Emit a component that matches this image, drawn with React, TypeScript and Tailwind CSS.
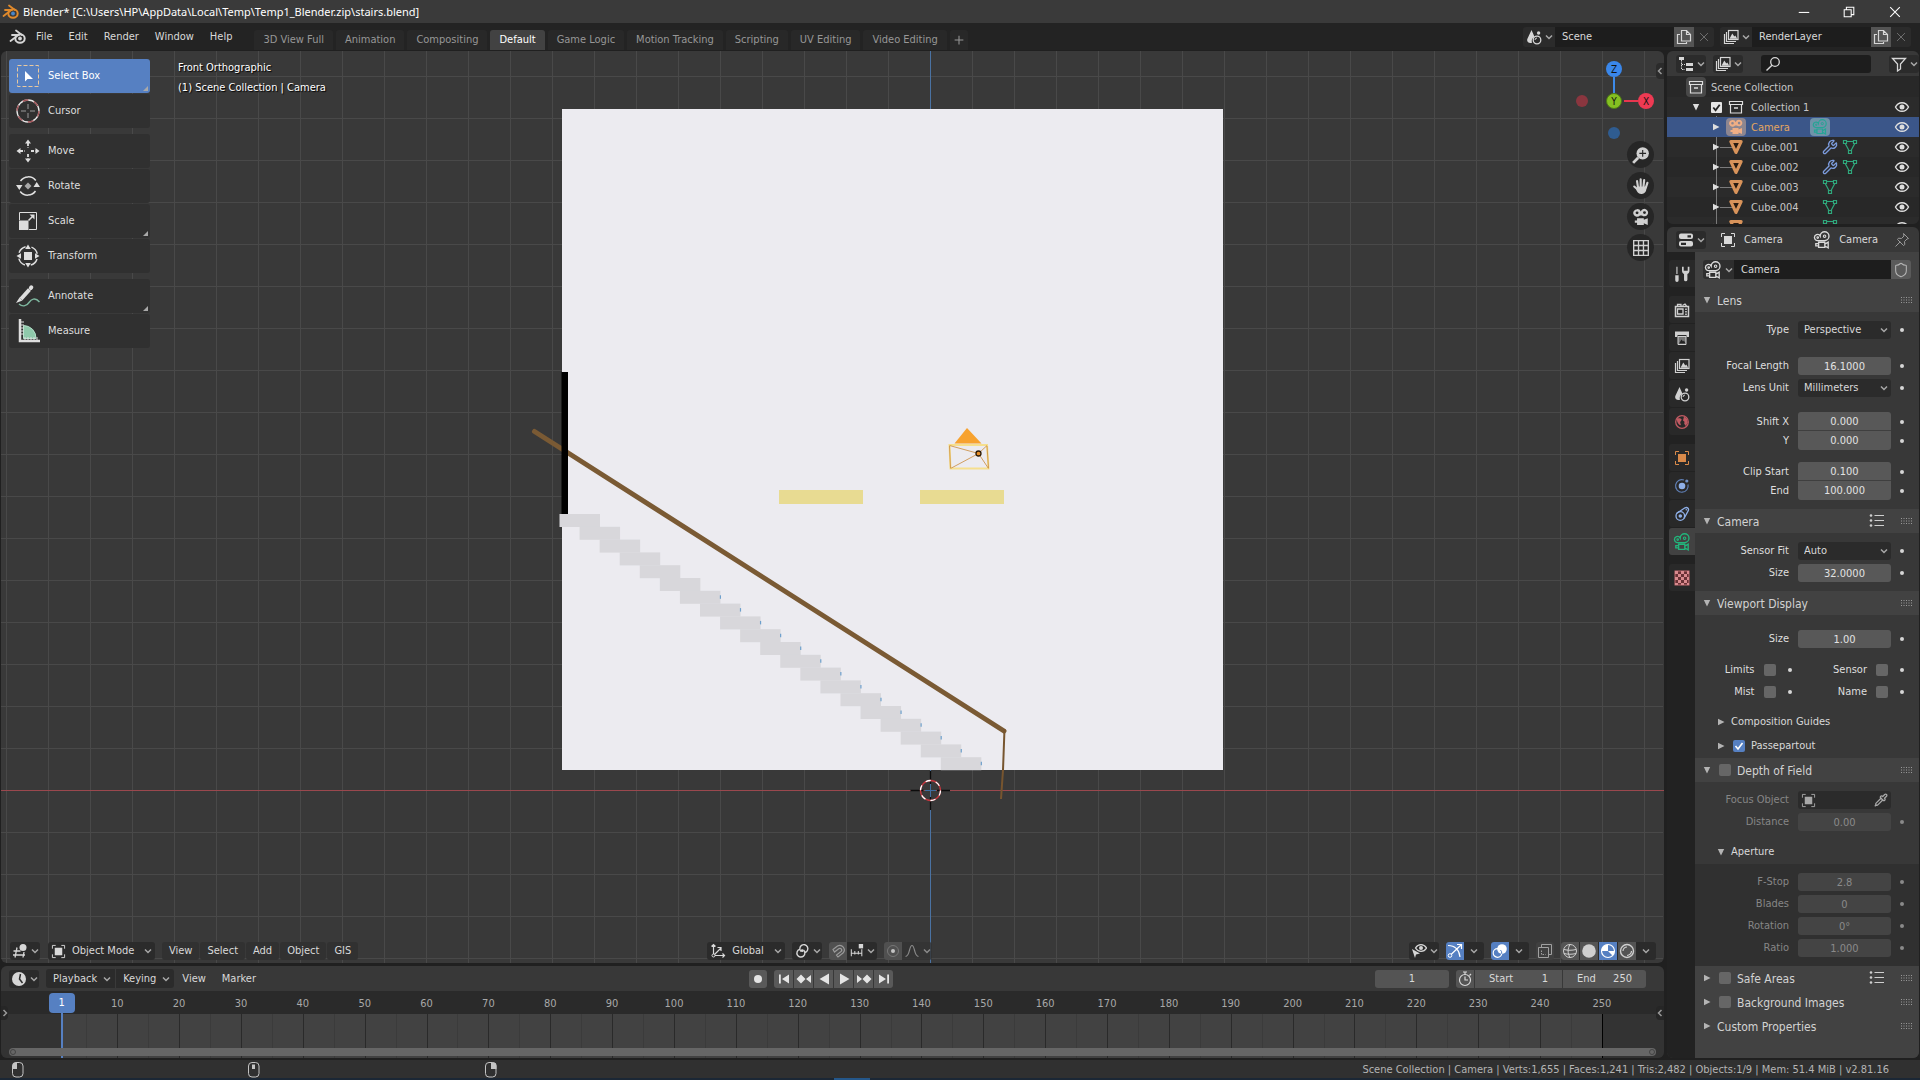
import React, { useId } from "react";
import { Wrench, Pipette, Shield } from "lucide-react";

/* ------------------------------------------------------------------ */
/* Icons, drawn on a 16 unit grid                                      */
/* ------------------------------------------------------------------ */

type IconProps = { className?: string; children?: React.ReactNode };

function Svg({ className = "size-4", children }: IconProps) {
  return (
    <svg
      viewBox="0 0 16 16"
      className={`shrink-0 ${className}`}
      fill="none"
      stroke="currentColor"
      strokeWidth="1"
      aria-hidden="true"
    >
      {children}
    </svg>
  );
}

const Chevron = ({ className = "size-2" }: { className?: string }) => (
  <svg viewBox="0 0 8 8" className={`shrink-0 ${className}`} fill="none" stroke="currentColor" strokeWidth="1.5" aria-hidden="true">
    <path d="M1 2.5 4 5.5 7 2.5" />
  </svg>
);

const SceneIcon = ({ className }: IconProps) => (
  <Svg className={className}>
    <path d="M5.5 1 1.2 10.2C.6 13 3 14.6 6 13.8A4.8 4.8 0 0 1 8.6 8z" fill="currentColor" stroke="none" />
    <circle cx="11" cy="11" r="3.8" strokeWidth="1.3" />
    <path d="M9 11a2 2 0 0 1 2-2" />
    <circle cx="12.6" cy="4" r="1.7" fill="currentColor" stroke="none" />
  </Svg>
);

const LayersIcon = ({ className }: IconProps) => (
  <Svg className={className}>
    <path d="M1.5 5v9.5H11M3.5 3v9.5H13" strokeWidth="1.2" />
    <rect x="5.5" y="1.5" width="9.5" height="9" strokeWidth="1.2" />
    <path d="m6.5 9.8 2.8-5.3 2 3 1-1 2 3.3z" fill="currentColor" stroke="none" />
  </Svg>
);

const DuplicateIcon = () => (
  <Svg className="size-4">
    <path d="M4 5.5H1.5v9h9V13" strokeWidth="1.2" />
    <path d="M5.5 1.5h5l4 4v6.5h-9zM10.5 1.5v4h4" strokeWidth="1.2" />
  </Svg>
);

const CrossIcon = ({ className }: IconProps) => (
  <Svg className={className}>
    <path d="m3.5 3.5 9 9m0-9-9 9" />
  </Svg>
);

const TreeIcon = () => (
  <Svg>
    <g fill="currentColor" stroke="none">
      <rect x="1" y="1" width="5" height="3" />
      <rect x="8" y="7" width="7" height="3" />
      <rect x="8" y="12" width="7" height="3" />
    </g>
    <path d="M3.5 4v9.5H7M3.5 8.5H7" strokeDasharray="1.5 1" />
  </Svg>
);

const SearchIcon = () => (
  <Svg>
    <circle cx="10" cy="6" r="4.3" strokeWidth="1.3" />
    <path d="m7 9.3-5.5 5.2" strokeWidth="1.5" />
  </Svg>
);

const FilterIcon = () => (
  <Svg>
    <path d="M1.5 2.5h13l-5 5.5v5L6.5 15V8z" strokeWidth="1.3" />
  </Svg>
);

const BoxIcon = ({ className }: IconProps) => (
  <Svg className={className}>
    <path d="M1.5 2.5h13v3h-13zM2.5 5.5v8.5h11V5.5" strokeWidth="1.2" />
    <path d="M6 9h4" strokeWidth="1.6" />
  </Svg>
);

const CameraSolid = ({ className }: IconProps) => (
  <Svg className={className}>
    <path
      fillRule="evenodd"
      fill="currentColor"
      stroke="none"
      d="M4.5 1a3.4 3.4 0 1 0 2.6 5.6h1.8A3.3 3.3 0 1 0 7.8 3.2 3.4 3.4 0 0 0 4.5 1zm0 2a1.3 1.3 0 1 1 0 2.6 1.3 1.3 0 0 1 0-2.6zm6.6-.2a1.3 1.3 0 1 1 0 2.6 1.3 1.3 0 0 1 0-2.6z"
    />
    <path d="M4.5 9h6v1.5L14 9v6l-3.5-1.5V15h-6v-2h-2v-2h2z" fill="currentColor" stroke="none" />
  </Svg>
);

const CameraOutline = ({ className }: IconProps) => (
  <Svg className={className}>
    <path d="M5 8.500H4a2.700 2.700 0 1 1 2.400-4A3.900 3.900 0 1 1 10.500 8.500H5M5 10h5.500v4.500H5zM5 11.200H2.500v2H5M10.500 11.700l3-1.700v5l-3-1.700" strokeWidth="1.200" />
    <circle cx="4.200" cy="5.800" r=".7" />
    <circle cx="10.300" cy="4.600" r="1.100" />
  </Svg>
);

const MeshObjectIcon = () => (
  <Svg className="size-4">
    <path d="M2.800 2.500h10.400L8 13.500z" stroke="#d8935a" fill="#2a1c12" strokeWidth="3" strokeLinejoin="round" />
  </Svg>
);

const MeshDataIcon = () => (
  <Svg className="size-4">
    <g stroke="#2fa87c" strokeWidth="1.200">
      <path d="M4.500 2.500h7M3.200 4.500l4 7.500M12.800 4.500l-4 7.500" />
      <path d="M1.500 1.500h3v3h-3zM11.500 1.500h3v3h-3zM6.500 11.500h3v3h-3z" />
    </g>
  </Svg>
);

const EyeIcon = () => (
  <Svg className="size-4">
    <path d="M1.500 8C3 5 5.500 3.700 8 3.700S13 5 14.500 8C13 11 10.500 12.300 8 12.300S3 11 1.500 8z" strokeWidth="1.400" />
    <circle cx="8" cy="8" r="2.500" fill="currentColor" stroke="none" />
  </Svg>
);

const PropsEditorIcon = () => (
  <Svg>
    <rect x="1" y="1.500" width="14" height="5.500" rx="2" fill="currentColor" stroke="none" />
    <rect x="1" y="9" width="14" height="5.500" rx="2" fill="currentColor" stroke="none" />
    <path d="M9.500 3.200H13v2.200H9.500zM3 10.700h5v2.200H3z" fill="#2a2a2a" stroke="none" />
  </Svg>
);

const ObjectIcon = ({ className }: IconProps) => (
  <Svg className={className}>
    <path d="M1.500 5V1.500H5M11 1.500h3.500V5M14.500 11v3.500H11M5 14.500H1.500V11" />
    <rect x="4" y="4" width="8" height="8" fill="currentColor" stroke="none" />
  </Svg>
);

const PinIcon = () => (
  <Svg>
    <path d="m9.500 1.500 5 5-1.500.5-2.500 2.500.3 3-1.300 1-6-6 1-1.300 3 .3L10 4zM6.200 9.800 1.500 14.500" />
  </Svg>
);

const ToolsIcon = () => (
  <Svg className="size-[18px]">
    <path d="M3.500 1.500V8" />
    <path d="M2 9h3v4.500a1.500 1.500 0 0 1-3 0zM8 1.500v3.500c0 1.600.7 2.300 1.800 3v5a1.500 1.500 0 0 0 3 0V8C14 7.300 14.600 6.600 14.600 5V1.500h-1.500v3.600h-3.600V1.500z" fill="currentColor" stroke="none" />
  </Svg>
);

const RenderIcon = () => (
  <Svg>
    <path d="M1.500 4.500h13v10h-13z" strokeWidth="1.500" />
    <path d="M3.500 7h5.500v5H3.500z" strokeWidth="1.300" />
    <path d="M12 6.500V8M12 9v1.500M12 11.500V13" strokeWidth="1.600" />
    <path d="M3.500 4V2.500H7V4M8.500 3.500 11 2l1.500 2" strokeWidth="1.300" />
  </Svg>
);

const OutputIcon = () => (
  <Svg>
    <path d="M1 1.500h14V7h-2.500V5h-9v2H1z" fill="currentColor" stroke="none" />
    <path d="M4 6.500h8v8H4z" fill="#777" />
    <path d="m5 13.500 2.500-4 1.500 2 1-1 1.500 3z" fill="#222" stroke="none" />
  </Svg>
);

const WorldIcon = () => (
  <Svg>
    <circle cx="8" cy="8" r="6.300" stroke="#c05a62" strokeWidth="1.300" />
    <path d="M3 4.500c2-.5 3.500-.5 4.500.8.600 1-.8 1.700-1.200 2.700-.4 1.200.8 1.600.5 3.300C5 11 2.500 8.500 3 4.500zM10 2.500l3 2.500.8 3.500-2 3.500-1.600-2.200.3-2-1.500-1.300z" fill="#c05a62" stroke="none" />
  </Svg>
);

const OrbitIcon = () => (
  <Svg>
    <path d="M14 6.500A6.300 6.300 0 1 1 10 2" stroke="#5f7fb5" strokeWidth="1.200" />
    <circle cx="8" cy="8" r="3.300" fill="#8fb0e8" stroke="none" />
    <circle cx="12.800" cy="3" r="1.600" fill="#6f8fc4" stroke="none" />
  </Svg>
);

const ConstraintIcon = () => (
  <Svg>
    <path d="M2.500 7.500 11 1.800c2.500-1 4.500 1 3 3.400L10 12.500" stroke="#8fb0e8" strokeWidth="1.300" />
    <circle cx="6.300" cy="10" r="4.300" stroke="#8fb0e8" strokeWidth="1.300" />
    <circle cx="6.300" cy="10" r="1.800" fill="#8fb0e8" stroke="none" />
    <circle cx="12.300" cy="3.800" r=".8" fill="#8fb0e8" stroke="none" />
  </Svg>
);

const CheckerIcon = () => (
  <Svg>
    <rect x="1" y="1" width="14" height="14" fill="#6a3236" stroke="#c46a70" />
    <g fill="#d98a8e" stroke="none">
      <path d="M1 1h3v3H1zM7 1h3v3H7zM4 4h3v3H4zM10 4h3v3h-3zM1 7h3v3H1zM7 7h3v3H7zM4 10h3v3H4zM10 10h3v3h-3zM13 7h2v3h-2zM13 1h2v3h-2zM1 13h3v2H1zM7 13h3v2H7zM13 13h2v2h-2z" />
    </g>
  </Svg>
);

const PresetIcon = () => (
  <Svg className="size-4">
    <path d="M5.500 2.500H15M5.500 7.500H15M5.500 12.500H15" strokeWidth="1.200" />
    <g fill="currentColor" stroke="none">
      <circle cx="2" cy="2.500" r="1.300" />
      <circle cx="2" cy="7.500" r="1.300" />
      <circle cx="2" cy="12.500" r="1.300" />
    </g>
  </Svg>
);

const GripIcon = () => (
  <svg width="11" height="6" className="shrink-0" stroke="#9a9a9a" strokeWidth="1" strokeDasharray="1 1.500" aria-hidden="true">
    <path d="M0 .5h11M0 3h11M0 5.500h11" />
  </svg>
);

const BlenderLogo = ({ color, dot }: { color: string; dot: string }) => (
  <svg viewBox="0 0 18 16" className="h-4 w-[18px] shrink-0" fill="none" aria-hidden="true">
    <path d="M7 1.500 13 6M1.500 12 9 6.200M3 6h7" stroke={color} strokeWidth="1.800" strokeLinecap="round" />
    <ellipse cx="11" cy="9.500" rx="4.700" ry="4.300" stroke={color} strokeWidth="2" />
    <circle cx="11" cy="9.500" r="1.900" fill={dot} />
  </svg>
);

/* ------------------------------------------------------------------ */
/* Shared controls                                                     */
/* ------------------------------------------------------------------ */

function IconMenu({ label, children, className = "" }: { label: string; children: React.ReactNode; className?: string }) {
  return (
    <button
      aria-label={label}
      className={`flex h-[18px] w-[30px] shrink-0 items-center justify-center gap-[3px] rounded-[3px] bg-[#2b2b2b] text-[#d6d6d6] ${className}`}
    >
      {children}
      <Chevron className="size-2 text-[#a8a8a8]" />
    </button>
  );
}

function Dropdown({ id, value, label, className = "" }: { id?: string; value: string; label?: string; className?: string }) {
  return (
    <span className={`relative flex items-center ${className}`}>
      <select
        id={id}
        aria-label={label}
        defaultValue={value}
        className="h-full w-full appearance-none rounded-[3px] bg-[#2b2b2b] pr-4 pl-1.5 text-[#d9d9d9] outline-none"
      >
        <option>{value}</option>
      </select>
      <Chevron className="pointer-events-none absolute right-[3px] size-2 text-[#a8a8a8]" />
    </span>
  );
}

function Tick({ id, checked = false, label }: { id?: string; checked?: boolean; label?: string }) {
  return (
    <span className="relative flex size-3 shrink-0">
      <input
        id={id}
        aria-label={label}
        type="checkbox"
        defaultChecked={checked}
        className="peer size-3 appearance-none rounded-[2px] bg-[#666] checked:bg-[#5680c2]"
      />
      <svg viewBox="0 0 12 12" className="pointer-events-none absolute inset-0 hidden peer-checked:block" fill="none" stroke="#fff" strokeWidth="1.600">
        <path d="m2.500 6 2.500 3 4.500-6" />
      </svg>
    </span>
  );
}

/* ------------------------------------------------------------------ */
/* Title bar and top bar                                               */
/* ------------------------------------------------------------------ */

function TitleBar() {
  return (
    <header className="flex h-[23px] shrink-0 items-center bg-[#3a3a3a] pr-0.5 font-['Noto_Sans','Open_Sans',sans-serif] text-[11px] text-white">
      <span className="ml-0.5 flex">
        <BlenderLogo color="#e08a2c" dot="#4a86c8" />
      </span>
      <h1 className="ml-[3px] whitespace-nowrap">Blender* [C:\Users\HP\AppData\Local\Temp\Temp1_Blender.zip\stairs.blend]</h1>
      <div className="ml-auto flex">
        <button aria-label="Minimize" className="flex w-[45px] justify-center">
          <Svg className="size-3.5"><path d="M2 8.500h12" strokeWidth="1.200" /></Svg>
        </button>
        <button aria-label="Restore" className="flex w-[46px] justify-center">
          <Svg className="size-3.5"><path d="M2.500 5.500h8v8h-8zM5 5V2.500h8.500V11H11" strokeWidth="1.200" /></Svg>
        </button>
        <button aria-label="Close" className="flex w-[46px] justify-center">
          <Svg className="size-3.5"><path d="m2.500 2.500 11 11m0-11-11 11" strokeWidth="1.200" /></Svg>
        </button>
      </div>
    </header>
  );
}

const workspaces = [
  "3D View Full",
  "Animation",
  "Compositing",
  "Default",
  "Game Logic",
  "Motion Tracking",
  "Scripting",
  "UV Editing",
  "Video Editing",
];

function DataBlock({ icon, label, value }: { icon: React.ReactNode; label: string; value: string }) {
  return (
    <div className="flex h-5 w-[191px] overflow-hidden rounded-[3px] bg-[#2b2b2b]">
      <button aria-label={`Browse ${label}`} className="flex w-8 shrink-0 items-center justify-center gap-[3px] text-[#d6d6d6]">
        {icon}
        <Chevron className="size-2 text-[#a8a8a8]" />
      </button>
      <input aria-label={label} defaultValue={value} className="w-0 flex-1 bg-[#1d1d1d] px-[7px] text-[#d9d9d9] outline-none" />
      <button aria-label={`New ${label}`} className="flex w-5 items-center justify-center bg-[#545454] text-[#d6d6d6]">
        <DuplicateIcon />
      </button>
      <button aria-label={`Remove ${label}`} className="flex w-5 items-center justify-center text-[#777]">
        <CrossIcon className="size-3.5" />
      </button>
    </div>
  );
}

function TopBar() {
  return (
    <div className="flex h-[27px] shrink-0 items-center bg-[#232323] pr-[9px] text-[#d9d9d9]">
      <button aria-label="Blender" className="ml-[9px] flex">
        <BlenderLogo color="#d6d6d6" dot="#d6d6d6" />
      </button>
      <nav className="ml-px flex">
        {["File", "Edit", "Render", "Window", "Help"].map((m) => (
          <button key={m} className="h-5 px-2">{m}</button>
        ))}
      </nav>
      <div role="tablist" className="ml-3.5 flex gap-[3px] self-end">
        {workspaces.map((w) => (
          <button
            key={w}
            role="tab"
            aria-selected={w === "Default"}
            className={`h-5 rounded-t-[3px] px-[9px] whitespace-nowrap ${w === "Default" ? "bg-[#424242] text-white" : "bg-[#282828] text-[#979797]"}`}
          >
            {w}
          </button>
        ))}
        <button aria-label="Add workspace" className="flex h-5 w-[18px] items-center justify-center rounded-t-[3px] bg-[#282828] text-[#979797]">
          <Svg className="size-3.5"><path d="M8 3v10M3 8h10" strokeWidth="1.200" /></Svg>
        </button>
      </div>
      <div className="ml-auto flex gap-1.5">
        <DataBlock label="Scene" value="Scene" icon={<SceneIcon />} />
        <DataBlock label="View layer" value="RenderLayer" icon={<LayersIcon />} />
      </div>
    </div>
  );
}

/* ------------------------------------------------------------------ */
/* 3D viewport                                                         */
/* ------------------------------------------------------------------ */

function Scene3D() {
  const steps = Array.from({ length: 20 }, (_, i) => i);
  return (
    <svg className="absolute inset-0 h-full w-full" aria-label="Front orthographic view">
      <g transform="translate(-1 -51)">
        <defs>
          <pattern id="grid" x="6" y="76" width="42" height="42" patternUnits="userSpaceOnUse">
            <path d="M.5 0v42M0 .5h42" stroke="#494949" fill="none" />
          </pattern>
        </defs>
        <rect x="0" y="51" width="100%" height="100%" fill="url(#grid)" />
        <path d="M0 790.500h1920" stroke="#9a484e" />
        <path d="M930.500 51v912" stroke="#4a72a2" />
        <rect x="562" y="109" width="661" height="661" fill="#ecebf0" />
        <rect x="779" y="490" width="84" height="14" fill="#e8db92" />
        <rect x="920" y="490" width="84" height="14" fill="#e8db92" />
        {steps.map((i) => (
          <rect key={i} x={559.5 + i * 20.07} y={514 + i * 12.8} width="40.500" height="13" fill="#d8d7db" />
        ))}
        {steps.slice(6).map((i) => (
          <path key={i} d={`M${600 + i * 20.07} ${518.5 + i * 12.8}v3.5`} stroke="#6ea0cc" strokeWidth="1.200" />
        ))}
        <path d="m534.500 431.500 469.500 299.500" stroke="#7a5a34" strokeWidth="5" strokeLinecap="round" />
        <path d="m1004.500 729-1.500 41-2 29" stroke="#77552f" strokeWidth="2" fill="none" />
        <rect x="561.500" y="372" width="6.500" height="142" fill="#000" />
        <path d="m967 428 14.500 15.500h-27z" fill="#f7a22f" />
        <path d="M949.500 445H987l1.500 23.500h-38z" stroke="#f6df8e" strokeWidth="2" fill="none" />
        <path d="m949.500 445.500 29 8 8.500-8M978.500 453.500l-28 15M978.500 453.500l10 15M949.500 446l1 22M987 446l1.500 22" stroke="#c98a3c" strokeWidth=".8" fill="none" />
        <circle cx="978.500" cy="453.500" r="2.500" fill="#e8902a" stroke="#2a1a08" strokeWidth="1.300" />
        <path d="M910.500 790.500h13M937 790.500h13M930.500 771v13M930.500 797v13" stroke="#0c0c0c" strokeWidth="1.300" />
        <path d="M930.500 785v11M925 790.500h11" stroke="#3f6da0" />
        <circle cx="930.500" cy="790.500" r="10" stroke="#c4373f" strokeWidth="1.300" fill="none" />
        <circle cx="930.500" cy="790.500" r="10" stroke="#fff" strokeWidth="1.300" fill="none" strokeDasharray="5.230 5.230" />
      </g>
    </svg>
  );
}

const toolGroups: { name: string; icon: React.ReactNode; more?: boolean; active?: boolean }[][] = [
  [
    {
      name: "Select Box",
      active: true,
      more: true,
      icon: (
        <>
          <rect x="1.500" y="1.500" width="21" height="21" stroke="#e8c9a0" strokeDasharray="4 2" />
          <path d="M9 7v10.500l2.500-2.500H17z" fill="#fff" stroke="none" />
        </>
      ),
    },
    {
      name: "Cursor",
      icon: (
        <>
          <circle cx="12" cy="12" r="11" stroke="#e8e8e8" strokeWidth="1.300" />
          <circle cx="12" cy="12" r="11" stroke="#a05055" strokeWidth="1.300" strokeDasharray="5.760 5.760" />
          <path d="M12 5v5M12 14v5M5 12h5M14 12h5" stroke="#9a9a9a" />
        </>
      ),
    },
  ],
  [
    {
      name: "Move",
      icon: (
        <>
          <path d="M12 4v5M12 15v5M4 12h5M15 12h5" strokeWidth="1.800" strokeDasharray="3 1.500" />
          <path d="m12 .5 3 4H9zM12 23.500l3-4H9zM.5 12l4-3v6zM23.500 12l-4-3v6z" fill="currentColor" stroke="none" />
        </>
      ),
    },
    {
      name: "Rotate",
      icon: (
        <>
          <path d="M4.500 7A9.500 9.500 0 0 1 19.800 6.500M19.500 17A9.500 9.500 0 0 1 4.200 17.500" strokeWidth="1.500" />
          <path d="M0 11h6.500l-3.200 5zM24 13h-6.500l3.200-5z" fill="currentColor" stroke="none" />
          <path d="m12 8.500 3.500 3.500-3.500 3.500L8.500 12z" fill="#a8a8a8" stroke="none" />
        </>
      ),
    },
    {
      name: "Scale",
      more: true,
      icon: (
        <>
          <path d="M3.500 11V3.500h17v17H13" />
          <rect x="3" y="11.500" width="9.500" height="9.500" fill="currentColor" stroke="none" />
          <path d="m12.500 11.500 4-4" strokeWidth="1.600" />
          <path d="M13.500 5.500h5v5z" fill="currentColor" stroke="none" />
        </>
      ),
    },
    {
      name: "Transform",
      icon: (
        <>
          <circle cx="12" cy="12" r="9.500" strokeWidth="1.500" strokeDasharray="9 6" strokeDashoffset="-3" />
          <rect x="8" y="8" width="8" height="8" fill="currentColor" stroke="none" />
          <path d="m12 .5 2.800 4.500H9.200zM12 23.500l2.800-4.500H9.200zM.5 12 5 9.200v5.600zM23.500 12 19 9.200v5.600z" fill="currentColor" stroke="none" />
        </>
      ),
    },
  ],
  [
    {
      name: "Annotate",
      more: true,
      icon: (
        <>
          <path d="M3 20c4 3.500 8 1.500 10-1.500s6-6 10.500-.5" stroke="#7fb8a0" strokeWidth="1.400" />
          <path d="M13.500 5.500 5 15" strokeWidth="4" />
          <path d="M3.500 13.500 0 19l6.500-2.500z" fill="currentColor" stroke="none" />
          <path d="m14.800 4 .5-.6" strokeWidth="4" strokeLinecap="round" />
        </>
      ),
    },
    {
      name: "Measure",
      icon: (
        <>
          <path d="M7.500 6.500v13H20A12.500 12.500 0 0 0 7.500 6.500z" fill="#8fc9ab" stroke="#b4e0ca" />
          <path d="M4 0v22h20" strokeWidth="2.500" />
          <path d="M5 3h3M5 6h3M5 9h3M5 12h3M5 15h3M9 21v-3M12 21v-3M15 21v-3M18 21v-3M21 21v-3" />
        </>
      ),
    },
  ],
];

function Toolbar() {
  return (
    <div role="toolbar" aria-label="Tools" className="absolute top-2 left-2 flex w-[141px] flex-col gap-1.5">
      {toolGroups.map((group, i) => (
        <div key={i} className="flex flex-col gap-px">
          {group.map((t) => (
            <button
              key={t.name}
              className={`relative flex h-[34px] items-center gap-2 rounded-[3px] pl-[7px] text-left ${t.active ? "bg-[#5680c2] text-white" : "bg-[#303030] text-[#dedede]"}`}
            >
              <svg viewBox="0 0 24 24" className="size-6 shrink-0" fill="none" stroke="currentColor" aria-hidden="true">
                {t.icon}
              </svg>
              {t.name}
              {t.more && (
                <svg viewBox="0 0 5 5" className="absolute right-0.5 bottom-0.5 size-[5px]" fill="#a9a9a9" aria-hidden="true">
                  <path d="M5 0v5H0z" />
                </svg>
              )}
            </button>
          ))}
        </div>
      ))}
    </div>
  );
}

function AxisGizmo() {
  return (
    <svg viewBox="0 0 80 84" className="h-[84px] w-20" aria-label="View axes" fontSize="10" textAnchor="middle" fill="#111">
      <path d="M40 18v17" stroke="#3d8ae8" strokeWidth="2" />
      <path d="M50 42h14" stroke="#e8364f" strokeWidth="2" />
      <circle cx="8" cy="42" r="6" fill="#8a363f" />
      <circle cx="40" cy="74" r="6" fill="#2f5c90" />
      <circle cx="40" cy="10" r="8" fill="#3a87ea" />
      <circle cx="40" cy="42" r="7.500" fill="#85c022" stroke="#4d7a16" />
      <circle cx="72" cy="42" r="8" fill="#ee3a53" />
      <text x="40" y="14">Z</text>
      <text x="40" y="46">Y</text>
      <text x="72" y="46">X</text>
    </svg>
  );
}

function ViewNavigation() {
  const round = "flex size-[27px] items-center justify-center rounded-full bg-[#262626] text-[#d0d0d0]";
  return (
    <div className="absolute top-2 right-2.5 flex flex-col items-end">
      <AxisGizmo />
      <div className="-mt-0.5 flex flex-col gap-1">
        <button aria-label="Zoom" className={round}>
          <Svg className="size-[18px]">
            <circle cx="9.500" cy="6.500" r="5.500" fill="currentColor" stroke="none" />
            <path d="M5.500 10.500 1 15" strokeWidth="2.500" />
            <path d="M9.500 3.500v6M6.500 6.500h6" stroke="#262626" />
          </Svg>
        </button>
        <button aria-label="Pan" className={round}>
          <Svg className="size-[18px]">
            <g strokeLinecap="round" strokeWidth="1.900">
              <path d="M5.300 9 4.500 3.700M7.700 8.500V2M10.200 8.500l.6-5.800M12.300 9.500l1.400-4.300M5.500 11.500 2 8.500" />
            </g>
            <path d="M4.500 8.500h8.500c0 3.500-1 6.500-4.500 6.500-2.500 0-3.500-1-4.800-3.700z" fill="currentColor" stroke="none" />
          </Svg>
        </button>
        <button aria-label="Camera view" className={round}>
          <CameraSolid className="size-[18px]" />
        </button>
        <button aria-label="Orthographic" className={round}>
          <Svg className="size-[18px]">
            <path d="M1.500 1.500h13v13h-13zM5.800 1.500v13M10.200 1.500v13M1.500 5.800h13M1.500 10.200h13" strokeWidth="1.200" />
          </Svg>
        </button>
      </div>
    </div>
  );
}

const flatBtn = "flex h-[18px] items-center justify-center";

function ViewportHeader() {
  return (
    <div className="absolute inset-x-0 bottom-[3px] flex items-center pr-2 pl-[9px] text-[#d9d9d9]">
      <IconMenu label="Editor type">
        <Svg>
          <path d="M5 4.500 3 14.500M12 9l-1 5.500M1.500 8h7M1 12h12" strokeWidth="1.300" />
          <circle cx="11" cy="4.500" r="3.500" fill="currentColor" stroke="none" />
        </Svg>
      </IconMenu>
      <button className="ml-2 flex h-[18px] w-[107px] items-center rounded-[3px] bg-[#2b2b2b] px-[3px]">
        <ObjectIcon className="size-[15px]" />
        <span className="ml-1.5 whitespace-nowrap">Object Mode</span>
        <Chevron className="ml-auto size-2 text-[#a8a8a8]" />
      </button>
      <nav className="ml-[7px] flex gap-px">
        {["View", "Select", "Add", "Object", "GIS"].map((m) => (
          <button key={m} className="h-[18px] rounded-[3px] bg-[#313131] px-[7px]">{m}</button>
        ))}
      </nav>
      <span className="flex-[347]" />
      <div className="flex gap-[7px]">
        <button className="flex h-[18px] w-[78px] items-center rounded-[3px] bg-[#2b2b2b] px-[3px]">
          <Svg>
            <path d="M3.500 1.500v11h11M1.500 3.500l2-2 2 2M12.500 10.500l2 2-2 2M4 12l7-7M7.500 4.500H11V8" strokeWidth="1.200" />
            <circle cx="3.500" cy="12.500" r="1.500" fill="#2b2b2b" />
          </Svg>
          <span className="ml-1.5">Global</span>
          <Chevron className="ml-auto size-2 text-[#a8a8a8]" />
        </button>
        <IconMenu label="Pivot point">
          <Svg>
            <path d="M7 8.500A4 4 0 1 1 11 9.500M9.500 7A4 4 0 1 1 5.500 6.300" strokeWidth="1.400" />
            <circle cx="8.200" cy="7.700" r="1.400" fill="currentColor" stroke="none" />
          </Svg>
        </IconMenu>
        <div className="flex overflow-hidden rounded-[3px]">
          <button aria-label="Snap" className={`${flatBtn} w-[18px] bg-[#505050] text-[#9a9a9a]`}>
            <Svg><path d="M3 6.500 7.500 3a4.500 4.500 0 0 1 5.500 7l-5 4-1.500-2L11 8.500a1.800 1.800 0 0 0-2.300-2.800L4.500 9z" strokeWidth="1.200" /></Svg>
          </button>
          <IconMenu label="Snapping" className="rounded-none">
            <Svg className="size-3.5">
              <path d="M1.500 6v8M5.500 8v4M9.500 8v4M13.500 6v8M1.500 10.500h12" strokeWidth="1.200" />
              <rect x="10" y="0" width="5" height="5" fill="currentColor" stroke="none" />
            </Svg>
          </IconMenu>
        </div>
        <div className="flex overflow-hidden rounded-[3px]">
          <button aria-label="Proportional editing" className={`${flatBtn} w-[18px] bg-[#505050] text-[#777]`}>
            <Svg>
              <circle cx="8" cy="8" r="5.500" />
              <circle cx="8" cy="8" r="2" fill="#c4c4c4" stroke="none" />
            </Svg>
          </button>
          <button aria-label="Falloff" className={`${flatBtn} w-[30px] gap-[3px] bg-[#333]/80 text-[#8a8a8a]`}>
            <Svg><path d="M1.500 13.500C6 13.500 5 2.500 8 2.500s2 11 6.500 11" strokeWidth="1.200" /></Svg>
            <Chevron className="size-2" />
          </button>
        </div>
      </div>
      <span className="flex-[474]" />
      <div className="flex gap-[7px]">
        <IconMenu label="Object visibility">
          <Svg>
            <path d="M4.500 5C6 2.500 8 1.700 10 1.700s4 .8 5.500 3.300C14 7.500 12 8.300 10 8.300S6 7.500 4.500 5z" strokeWidth="1.300" />
            <circle cx="10" cy="5" r="2" fill="currentColor" stroke="none" />
            <path d="m1 6 8 4.500-4 1L4 15z" fill="currentColor" stroke="none" />
          </Svg>
        </IconMenu>
        <div className="flex overflow-hidden rounded-[3px] bg-[#2b2b2b]">
          <button aria-label="Show gizmo" className={`${flatBtn} w-[18px] bg-[#5680c2] text-white`}>
            <Svg>
              <path d="M1 2.500c7 0 11.500 4.500 12 11.500M3 12.500 14 2M10 1.500h4.500V6" strokeWidth="1.200" />
              <circle cx="3" cy="12.500" r="1.800" fill="#5680c2" />
            </Svg>
          </button>
          <button aria-label="Gizmo options" className={`${flatBtn} w-5 text-[#a8a8a8]`}><Chevron /></button>
        </div>
        <div className="flex overflow-hidden rounded-[3px] bg-[#2b2b2b]">
          <button aria-label="Show overlays" className={`${flatBtn} w-[18px] bg-[#5680c2] text-white`}>
            <Svg>
              <circle cx="10" cy="6" r="4.800" fill="currentColor" stroke="none" />
              <circle cx="5.500" cy="10" r="4.300" strokeWidth="1.200" />
              <path d="M8.500 7a4.300 4.300 0 0 1 1.200 3.800" stroke="#5680c2" />
            </Svg>
          </button>
          <button aria-label="Overlay options" className={`${flatBtn} w-5 text-[#a8a8a8]`}><Chevron /></button>
        </div>
        <button aria-label="X-ray" className={`${flatBtn} w-[18px] rounded-[3px] bg-[#404040] text-[#a0a0a0]`}>
          <Svg><path d="M1.500 4.500h10v10h-10zM4.500 4V1.500h10v10H12" /><path d="M4.500 7.500v4h4" strokeDasharray="1.500 1" /></Svg>
        </button>
        <div className="flex overflow-hidden rounded-[3px] bg-[#2b2b2b]">
          <button aria-label="Wireframe" className={`${flatBtn} w-[18px] bg-[#545454] text-[#cfcfcf]`}>
            <Svg><circle cx="8" cy="8" r="6.500" /><path d="M2 6.500c4 1 8 1 12 0M2 10.500c4 1 8 1 12 0M8 1.500c-2.500 4-2.500 9 0 13" /></Svg>
          </button>
          <button aria-label="Solid" className={`${flatBtn} ml-px w-[18px] bg-[#545454] text-[#cfcfcf]`}>
            <Svg><circle cx="8" cy="8" r="6.800" fill="currentColor" stroke="none" /></Svg>
          </button>
          <button aria-label="Material preview" className={`${flatBtn} ml-px w-[18px] bg-[#5680c2] text-white`}>
            <Svg>
              <circle cx="8" cy="8" r="6.500" strokeWidth="1.200" />
              <path d="M8 8V1.500A6.500 6.500 0 0 0 1.500 8zM8 8h6.500a6.500 6.500 0 0 1-2 4.600zM8 8l-.5 6.400" fill="currentColor" stroke="none" />
            </Svg>
          </button>
          <button aria-label="Rendered" className={`${flatBtn} ml-px w-[18px] bg-[#545454] text-[#cfcfcf]`}>
            <Svg><circle cx="8" cy="8" r="6.500" strokeWidth="1.400" /><path d="M4 8a4 4 0 0 1 4-4M12.500 8A4.500 4.500 0 0 1 8 12.500" strokeWidth="1.200" /></Svg>
          </button>
          <button aria-label="Shading options" className={`${flatBtn} w-5 text-[#a8a8a8]`}><Chevron /></button>
        </div>
      </div>
    </div>
  );
}

function Viewport() {
  return (
    <main className="relative min-h-0 flex-1 overflow-hidden rounded-md bg-[#393939]">
      <Scene3D />
      <Toolbar />
      <div className="absolute top-[7px] left-[177px] flex flex-col text-white [text-shadow:1px_1px_1px_#000]">
        <span className="h-5 leading-5">Front Orthographic</span>
        <span className="h-5 leading-5">(1) Scene Collection | Camera</span>
      </div>
      <ViewNavigation />
      <button aria-label="Show sidebar" className="absolute top-3 right-0 flex h-4 w-2 items-center justify-center rounded-l bg-[#2b2b2b] text-[#999]">
        <Chevron className="size-2 rotate-90" />
      </button>
      <ViewportHeader />
    </main>
  );
}

/* ------------------------------------------------------------------ */
/* Timeline                                                            */
/* ------------------------------------------------------------------ */

const framePos = (frame: number) => `${((54.4 + frame * 6.186) / 1663) * 100}%`;
const tens = Array.from({ length: 25 }, (_, i) => (i + 1) * 10);
const fives = Array.from({ length: 25 }, (_, i) => i * 10 + 5);

const transport: [string, string][] = [
  ["Jump to start", "M3 3.500h1.800v9H3zM13 3.500v9L6 8z"],
  ["Previous keyframe", "M5 3.500 9.500 8 5 12.500.5 8zM15 4v8L10 8z"],
  ["Play backwards", "M13 2.500v11L3.500 8z"],
  ["Play", "M4 2.500v11L13.500 8z"],
  ["Next keyframe", "M11 3.500 15.500 8 11 12.500 6.500 8zM1 4v8l5-4z"],
  ["Jump to end", "M13 3.500h-1.800v9H13zM3 3.500v9L10 8z"],
];

function Timeline() {
  const startId = useId();
  const endId = useId();
  return (
    <section aria-label="Timeline" className="relative flex flex-col overflow-hidden rounded-md bg-[#2a2a2a]">
      <div className="flex h-[25px] items-center bg-[#383838] pr-[18px] pl-2 text-[#d9d9d9]">
        <div className="flex items-center">
          <IconMenu label="Timeline editor">
            <Svg>
              <circle cx="8" cy="8" r="7" fill="currentColor" stroke="none" />
              <path d="M9.500 3 8.500 8l3 4" stroke="#2b2b2b" strokeWidth="1.500" />
            </Svg>
          </IconMenu>
          <div className="ml-[7px] flex overflow-hidden rounded-[3px] bg-[#2b2b2b]">
            {["Playback", "Keying"].map((m) => (
              <button key={m} className="flex h-[19px] items-center gap-1.5 pr-1 pl-[7px] first:border-r first:border-[#3a3a3a]">
                {m}
                <Chevron className="size-2 text-[#a8a8a8]" />
              </button>
            ))}
          </div>
          <button className="ml-2 h-5">View</button>
          <button className="ml-4 h-5">Marker</button>
        </div>
        <span className="flex-[493]" />
        <div className="flex gap-[7px] text-[#e4e4e4]">
          <button aria-label="Auto keying" className="flex h-[18px] w-[18px] items-center justify-center rounded-[3px] bg-[#595959]">
            <Svg><circle cx="8" cy="8" r="4" fill="currentColor" stroke="none" /></Svg>
          </button>
          <div className="flex gap-px overflow-hidden rounded-[3px]">
            {transport.map(([name, d]) => (
              <button key={name} aria-label={name} className="flex h-[18px] w-[19px] items-center justify-center bg-[#595959]">
                <Svg><path d={d} fill="currentColor" stroke="none" /></Svg>
              </button>
            ))}
          </div>
        </div>
        <span className="flex-[482]" />
        <div className="flex gap-[7px]">
          <input aria-label="Current frame" defaultValue="1" className="h-[18px] w-[74px] rounded-[3px] bg-[#545454] text-center outline-none" />
          <div className="flex gap-px overflow-hidden rounded-[3px]">
            <button aria-label="Use preview range" className="flex h-[18px] w-[18px] items-center justify-center bg-[#545454]">
              <Svg>
                <circle cx="8" cy="9" r="5.500" strokeWidth="1.200" />
                <path d="M8 5.500V9h3M8 3.500V1M6 1h4M12.500 4.500 14 3" strokeWidth="1.200" />
              </Svg>
            </button>
            <span className="flex h-[18px] w-[87px] items-center justify-between bg-[#545454] px-3.5">
              <label htmlFor={startId}>Start</label>
              <input id={startId} defaultValue="1" className="w-8 text-right outline-none" />
            </span>
            <span className="flex h-[18px] w-[83px] items-center justify-between bg-[#545454] px-3.5">
              <label htmlFor={endId}>End</label>
              <input id={endId} defaultValue="250" className="w-7 text-right outline-none" />
            </span>
          </div>
        </div>
      </div>

      <div className="relative h-[67px]">
        <div className="absolute inset-x-0 top-[23px] bottom-0 bg-[#333]" />
        <div className="absolute top-[23px] bottom-0 bg-[#424242]" style={{ left: framePos(1), right: `calc(100% - ${framePos(250)})` }} />
        {fives.map((f) => (
          <span key={f} className="absolute top-[23px] bottom-0 w-px bg-[#3b3b3b]" style={{ left: framePos(f) }} />
        ))}
        {tens.map((f) => (
          <span key={f} className={`absolute top-[23px] bottom-0 w-px ${f === 250 ? "bg-black" : "bg-[#2a2a2a]"}`} style={{ left: framePos(f) }} />
        ))}
        {tens.map((f) => (
          <span key={f} className="absolute top-1 w-10 -translate-x-1/2 text-center leading-[18px] text-[#a8a8a8]" style={{ left: framePos(f) }}>
            {f}
          </span>
        ))}
        <span className="absolute top-5 bottom-0 w-0.5 -translate-x-1/2 bg-[#5680c2]" style={{ left: framePos(1) }} />
        <span className="absolute top-0.5 h-5 w-[26px] -translate-x-1/2 rounded bg-[#5680c2] text-center leading-5 text-white" style={{ left: framePos(1) }}>
          1
        </span>
        <div className="absolute right-2 bottom-0.5 left-2 flex h-2 items-center justify-between rounded-full bg-[#666] px-px">
          <span className="size-1.5 rounded-full border border-[#444]" />
          <span className="size-1.5 rounded-full border border-[#444]" />
        </div>
        <button aria-label="Show channels" className="absolute top-[15px] left-0 flex h-3.5 w-[7px] items-center justify-center rounded-r bg-[#262626] text-[#999]">
          <Chevron className="size-2 -rotate-90" />
        </button>
        <button aria-label="Show sidebar" className="absolute top-[15px] right-0 flex h-3.5 w-2 items-center justify-center rounded-l bg-[#262626] text-[#999]">
          <Chevron className="size-2 rotate-90" />
        </button>
      </div>
    </section>
  );
}

/* ------------------------------------------------------------------ */
/* Outliner                                                            */
/* ------------------------------------------------------------------ */

const cell = "flex w-5 shrink-0 items-center justify-center";

function Disclosure({ open = false }: { open?: boolean }) {
  return (
    <svg viewBox="0 0 8 8" className="size-2 shrink-0" fill="currentColor" aria-hidden="true">
      <path d={open ? "M.8 1h6.400L4 7.500z" : "M1 .8v6.400L7.500 4z"} />
    </svg>
  );
}

const objects = [
  { name: "Cube.001", modifier: true },
  { name: "Cube.002", modifier: true },
  { name: "Cube.003", modifier: false },
  { name: "Cube.004", modifier: false },
  { name: "", modifier: false },
];

function Outliner() {
  const eye = (
    <button aria-label="Toggle visibility" className={`${cell} mr-[7px] ml-auto text-[#dedede]`}>
      <EyeIcon />
    </button>
  );
  return (
    <section aria-label="Outliner" className="flex h-[173px] shrink-0 flex-col overflow-hidden rounded-md bg-[#282828] text-[#c6c6c6]">
      <div className="flex h-[25px] shrink-0 items-center bg-[#383838] pl-[9px]">
        <IconMenu label="Outliner editor"><TreeIcon /></IconMenu>
        <IconMenu label="Display mode" className="ml-[7px]"><LayersIcon /></IconMenu>
        <label className="ml-[18px] flex h-[18px] flex-1 items-center rounded-[3px] bg-[#1d1d1d] pl-1 text-[#d6d6d6]">
          <SearchIcon />
          <input aria-label="Filter by name" className="w-0 flex-1 outline-none" />
        </label>
        <IconMenu label="Filter" className="ml-[18px]"><FilterIcon /></IconMenu>
      </div>
      <div className="relative flex-1 pt-px">
        <span className="absolute top-10 bottom-0 left-[49px] w-px bg-[#7a7a7a]" />
        <div className="flex h-5 items-center pl-[19px]">
          <span className={`${cell} h-5 rounded bg-[#484848] text-[#dedede]`}><BoxIcon className="size-4" /></span>
          <span className="ml-[5px] pt-0.5">Scene Collection</span>
        </div>
        <div className="flex h-5 items-center bg-[#2b2b2b] pl-[19px]">
          <button aria-label="Collapse" className={`${cell} text-[#dedede]`}><Disclosure open /></button>
          <span className={cell}>
            <span className="relative flex size-[11px]">
              <input type="checkbox" aria-label="Enable Collection 1" defaultChecked className="size-[11px] appearance-none rounded-[1px] bg-[#e4e4e4]" />
              <svg viewBox="0 0 12 12" className="pointer-events-none absolute inset-0" fill="none" stroke="#222" strokeWidth="2">
                <path d="m2.500 6 2.500 3 4.500-6" />
              </svg>
            </span>
          </span>
          <span className={`${cell} text-[#dedede]`}><BoxIcon className="size-4" /></span>
          <span className="ml-[5px] pt-0.5">Collection 1</span>
          {eye}
        </div>
        <div className="relative flex h-5 items-center bg-[#3b5689] pl-[39px]">
          <button aria-label="Expand" className={`${cell} text-[#dedede]`}><Disclosure /></button>
          <span className={`${cell} h-[18px] rounded bg-[#8d8690] text-[#f0ae84]`}><CameraSolid className="size-4" /></span>
          <span className="ml-[5px] w-[59px] pt-0.5 text-[#e3a55f]">Camera</span>
          <span className={`${cell} h-[18px] rounded bg-[#6f93a8] text-[#25a595]`}><CameraOutline className="size-4" /></span>
          {eye}
        </div>
        {objects.map((o, i) => (
          <div key={i} className={`relative flex h-5 items-center pl-[39px] ${i % 2 ? "bg-[#282828]" : "bg-[#2b2b2b]"}`}>
            <span className="absolute left-[49px] h-full w-px bg-[#7a7a7a]" />
            <span className="absolute left-[53px] h-px w-3 bg-[#7a7a7a]" />
            <button aria-label={`Expand ${o.name}`} className={`${cell} relative text-[#dedede]`}><Disclosure /></button>
            <span className={`${cell} relative`}><MeshObjectIcon /></span>
            <span className="ml-[5px] w-[69px] pt-0.5">{o.name}</span>
            {o.modifier && <span className={cell}><Wrench className="size-4 text-[#7c9bdc]" strokeWidth={2} /></span>}
            <span className={cell}><MeshDataIcon /></span>
            {eye}
          </div>
        ))}
      </div>
    </section>
  );
}

/* ------------------------------------------------------------------ */
/* Properties editor                                                   */
/* ------------------------------------------------------------------ */

const Dot = ({ dim = false, className = "" }: { dim?: boolean; className?: string }) => (
  <span className={`size-1 shrink-0 rounded-full ${dim ? "bg-[#8a8a8a]" : "bg-[#d6d6d6]"} ${className}`} />
);

function Field({
  label,
  value,
  kind = "number",
  dim = false,
  join = "",
  className = "",
}: {
  label: string;
  value: string;
  kind?: "number" | "select";
  dim?: boolean;
  join?: "top" | "bottom" | "";
  className?: string;
}) {
  const id = useId();
  const shape = join === "top" ? "h-[19px] rounded-t-[3px] border-b border-[#3f3f3f]" : join === "bottom" ? "h-[19px] rounded-b-[3px]" : "h-[18px] rounded-[3px]";
  return (
    <div className={`flex items-center ${join ? "h-[19px]" : "h-5"} ${className}`}>
      <label htmlFor={id} className={`w-[94px] shrink-0 text-right ${dim ? "text-[#868686]" : "text-[#dedede]"}`}>
        {label}
      </label>
      {kind === "select" ? (
        <Dropdown id={id} value={value} className="ml-[9px] h-[18px] w-0 flex-1" />
      ) : (
        <input
          id={id}
          defaultValue={value}
          disabled={dim}
          className={`ml-[9px] w-0 flex-1 text-center outline-none ${shape} ${dim ? "bg-[#444] text-[#8a8a8a]" : "bg-[#585858] text-[#e2e2e2]"}`}
        />
      )}
      <Dot dim={dim} className="mr-[15px] ml-[9px]" />
    </div>
  );
}

function PanelHeader({ title, open = false, check = false, preset = false }: { title: string; open?: boolean; check?: boolean; preset?: boolean }) {
  return (
    <div className="flex h-6 items-center bg-[#424242] pr-[7px] pl-2 text-[#d2d2d2]">
      <button aria-label={`Toggle ${title}`} className="flex text-[#b4b4b4]">
        <Disclosure open={open} />
      </button>
      {check && (
        <span className="ml-2 flex">
          <Tick label={title} />
        </span>
      )}
      <h2 className="ml-1.5 pt-0.5 text-xs">{title}</h2>
      <span className="ml-auto flex items-center gap-4">
        {preset && (
          <button aria-label={`${title} presets`} className="flex text-[#cfcfcf]">
            <PresetIcon />
          </button>
        )}
        <GripIcon />
      </span>
    </div>
  );
}

function CheckPair({ label, className = "" }: { label: string; className?: string }) {
  const id = useId();
  return (
    <div className={`flex items-center justify-end text-[#dedede] ${className}`}>
      <label htmlFor={id} className="mr-[9px]">{label}</label>
      <Tick id={id} />
      <Dot className="ml-3" />
    </div>
  );
}

const tabGroups: { name: string; icon: React.ReactNode; active?: boolean }[][] = [
  [{ name: "Tool", icon: <ToolsIcon /> }],
  [
    { name: "Render", icon: <RenderIcon /> },
    { name: "Output", icon: <OutputIcon /> },
    { name: "View Layer", icon: <LayersIcon /> },
    { name: "Scene", icon: <SceneIcon /> },
    { name: "World", icon: <WorldIcon /> },
  ],
  [
    { name: "Object", icon: <ObjectIcon className="size-4 text-[#d98a4a]" /> },
    { name: "Physics", icon: <OrbitIcon /> },
    { name: "Constraints", icon: <ConstraintIcon /> },
    { name: "Object Data", icon: <CameraOutline className="size-[18px] text-[#22b57c]" />, active: true },
  ],
  [{ name: "Texture", icon: <CheckerIcon /> }],
];

function Properties() {
  const passId = useId();
  return (
    <section aria-label="Properties" className="flex min-h-0 flex-1 flex-col overflow-hidden rounded-md bg-[#383838] text-[#d9d9d9]">
      <div className="flex h-[25px] shrink-0 items-center pl-[9px]">
        <IconMenu label="Properties editor"><PropsEditorIcon /></IconMenu>
        <ObjectIcon className="ml-3.5 size-4" />
        <span className="ml-2">Camera</span>
        <CameraOutline className="ml-auto size-[18px]" />
        <span className="ml-2">Camera</span>
        <button aria-label="Pin" className="mr-[9px] ml-4 flex text-[#9a9a9a]"><PinIcon /></button>
      </div>
      <div className="flex min-h-0 flex-1">
        <div role="tablist" aria-label="Property tabs" className="flex w-7 shrink-0 flex-col gap-[9px] bg-[#222] pt-2 pl-0.5">
          {tabGroups.map((g, i) => (
            <div key={i} className="flex flex-col gap-px">
              {g.map((t) => (
                <button
                  key={t.name}
                  role="tab"
                  aria-label={t.name}
                  aria-selected={!!t.active}
                  className={`flex h-[27px] items-center justify-center rounded-l-[3px] ${t.active ? "bg-[#424242]" : "bg-[#292929] text-[#d0d0d0]"}`}
                >
                  {t.icon}
                </button>
              ))}
            </div>
          ))}
        </div>
        <div className="flex min-w-0 flex-1 flex-col bg-[#424242]">
          <div className="mx-2 mt-2 mb-[9px] flex h-[19px] overflow-hidden rounded-[3px]">
            <button aria-label="Browse camera data" className="flex w-[31px] items-center justify-center gap-[3px] bg-[#2e2e2e]">
              <CameraOutline className="size-[18px]" />
              <Chevron className="size-2 text-[#a8a8a8]" />
            </button>
            <input aria-label="Camera data name" defaultValue="Camera" className="w-0 flex-1 bg-[#1d1d1d] px-[7px] outline-none" />
            <button aria-label="Fake user" className="flex w-5 items-center justify-center bg-[#5a5a5a] text-[#b4b4b4]">
              <Shield className="size-4" strokeWidth={1.6} />
            </button>
          </div>

          <PanelHeader title="Lens" open />
          <div className="bg-[#383838] pt-2 pb-[9px]">
            <Field label="Type" value="Perspective" kind="select" />
            <Field label="Focal Length" value="16.1000" className="mt-4" />
            <Field label="Lens Unit" value="Millimeters" kind="select" className="mt-0.5" />
            <Field label="Shift X" value="0.000" join="top" className="mt-3.5" />
            <Field label="Y" value="0.000" join="bottom" />
            <Field label="Clip Start" value="0.100" join="top" className="mt-3" />
            <Field label="End" value="100.000" join="bottom" />
          </div>

          <PanelHeader title="Camera" open preset />
          <div className="bg-[#383838] pt-2 pb-2">
            <Field label="Sensor Fit" value="Auto" kind="select" />
            <Field label="Size" value="32.0000" className="mt-0.5" />
          </div>

          <PanelHeader title="Viewport Display" open />
          <div className="bg-[#383838] pt-3.5">
            <Field label="Size" value="1.00" />
            <div className="mt-[11px] grid grid-cols-2 gap-y-0.5 pr-[15px]">
              <CheckPair label="Limits" className="h-5 pr-2" />
              <CheckPair label="Sensor" className="h-5" />
              <CheckPair label="Mist" className="h-5 pr-2" />
              <CheckPair label="Name" className="h-5" />
            </div>
            <div className="mt-2 flex h-6 items-center pl-[22px]">
              <button aria-label="Expand Composition Guides" className="flex text-[#b4b4b4]"><Disclosure /></button>
              <h3 className="ml-1.5">Composition Guides</h3>
            </div>
            <div className="flex h-6 items-center pl-[22px]">
              <button aria-label="Expand Passepartout" className="flex text-[#b4b4b4]"><Disclosure /></button>
              <span className="ml-2 flex"><Tick id={passId} checked /></span>
              <label htmlFor={passId} className="ml-1.5">Passepartout</label>
            </div>
          </div>

          <PanelHeader title="Depth of Field" open check />
          <div className="bg-[#383838] pt-2">
            <div className="flex h-5 items-center text-[#868686]">
              <span className="w-[94px] shrink-0 text-right">Focus Object</span>
              <button aria-label="Focus Object" className="ml-[9px] flex h-[18px] flex-1 items-center justify-between rounded-[3px] bg-[#2b2b2b] px-[3px] text-[#a8a8a8]">
                <ObjectIcon className="size-[15px]" />
                <Pipette className="size-3.5" strokeWidth={2.2} />
              </button>
              <span className="w-7" />
            </div>
            <Field label="Distance" value="0.00" dim className="mt-0.5" />
            <div className="mt-2 flex h-6 items-center pl-[22px]">
              <button aria-label="Collapse Aperture" className="flex text-[#b4b4b4]"><Disclosure open /></button>
              <h3 className="ml-1.5">Aperture</h3>
            </div>
          </div>
          <div className="flex flex-col gap-0.5 bg-[#303030] py-2">
            <Field label="F-Stop" value="2.8" dim />
            <Field label="Blades" value="0" dim />
            <Field label="Rotation" value="0°" dim />
            <Field label="Ratio" value="1.000" dim />
          </div>

          <PanelHeader title="Safe Areas" check preset />
          <PanelHeader title="Background Images" check />
          <PanelHeader title="Custom Properties" />
        </div>
      </div>
    </section>
  );
}

/* ------------------------------------------------------------------ */
/* Status bar                                                          */
/* ------------------------------------------------------------------ */

function MouseIcon({ button }: { button: "left" | "middle" | "right" }) {
  const fills = {
    left: "M.5 7V3.500a3 3 0 0 1 3-3H5V7z",
    middle: "M4 2.500h3V7H4z",
    right: "M11.500 7V3.500a3 3 0 0 0-3-3H6V7z",
  };
  return (
    <svg viewBox="0 0 12 16" className="h-4 w-3 shrink-0" fill="none" stroke="#c4c4c4" aria-hidden="true">
      <rect x=".5" y=".5" width="10.500" height="14.500" rx="3.500" />
      <path d={fills[button]} fill="#c4c4c4" stroke="none" />
    </svg>
  );
}

function StatusBar() {
  return (
    <footer className="flex h-5 shrink-0 items-center border-b-2 border-[#1b2735] bg-[#303030] pt-0.5 pr-[31px] pl-3 text-[#b4b4b4]">
      <div className="flex w-[709px]">
        <span className="flex-1"><MouseIcon button="left" /></span>
        <span className="flex-1"><MouseIcon button="middle" /></span>
        <span className="flex-1"><MouseIcon button="right" /></span>
      </div>
      <span className="ml-[113px] h-0.5 w-9 translate-y-0.5 self-end bg-[#24578a]" />
      <span className="ml-auto whitespace-nowrap">
        Scene Collection | Camera | Verts:1,655 | Faces:1,241 | Tris:2,482 | Objects:1/9 | Mem: 51.4 MiB | v2.81.16
      </span>
    </footer>
  );
}

export default function App() {
  return (
    <div className="flex h-screen flex-col overflow-hidden bg-[#202020] font-['DejaVu_Sans_Condensed','DejaVu_Sans',sans-serif] text-[11px] leading-4">
      <TitleBar />
      <TopBar />
      <div className="flex min-h-0 flex-1 gap-[3px] px-px pt-px pb-0.5">
        <div className="flex min-w-0 flex-1 flex-col gap-[3px]">
          <Viewport />
          <Timeline />
        </div>
        <aside className="flex w-[252px] shrink-0 flex-col gap-[3px]">
          <Outliner />
          <Properties />
        </aside>
      </div>
      <StatusBar />
    </div>
  );
}
